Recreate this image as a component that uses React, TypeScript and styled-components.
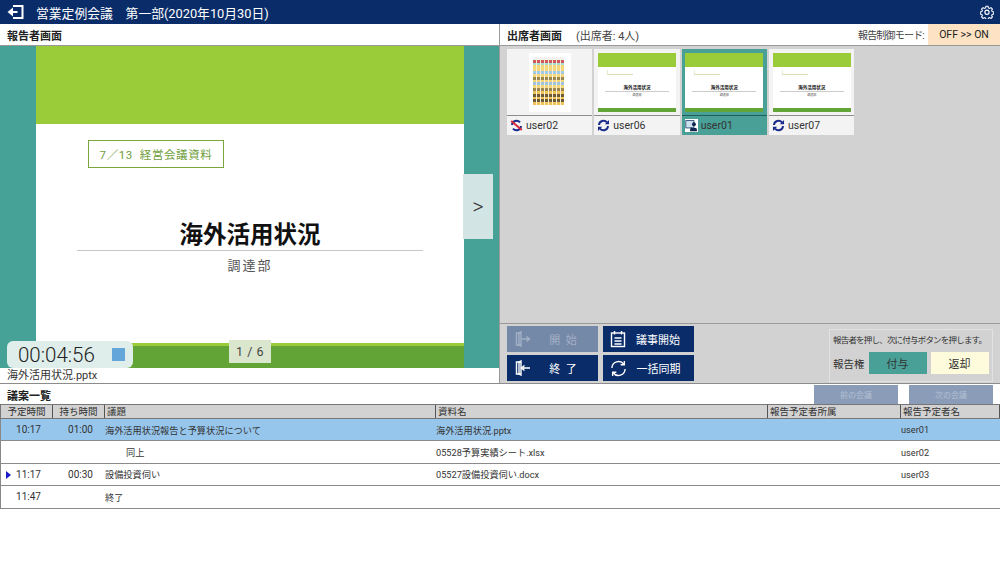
import styled, { createGlobalStyle } from "styled-components";

const GlobalStyle = createGlobalStyle`
    html, body {
        margin: 0;
        padding: 0;
        background: #fff;
        font-family: Roboto, "Noto Sans CJK JP", sans-serif;
        color: #222;
    }
`

const Page = styled.div`
    width: 1000px;
    height: 563px;
    overflow: hidden;
    display: flex;
    flex-direction: column;
    background: #fff;
`
const TopBar = styled.div`
    height: 24px;
    flex: none;
    background: #0a2d6a;
    color: #fff;
    display: flex;
    align-items: center;
    padding: 0 6px 0 7px;
    font-size: 12.8px;
`
const TopTitle = styled.span`
    margin-left: 12px;
    white-space: pre;
    flex: 1;
`
const Main = styled.div`
    height: 359px;
    flex: none;
    display: flex;
    border-bottom: 1px solid #8c8c8c;
`
const LeftPane = styled.div`
    width: 499px;
    flex: none;
    display: flex;
    flex-direction: column;
    border-right: 1px solid #999;
`
const RightPane = styled.div`
    flex: 1;
    display: flex;
    flex-direction: column;
    background: #d2d2d2;
`
const PaneHead = styled.div`
    height: 21px;
    flex: none;
    display: flex;
    align-items: center;
    padding-left: 7px;
    font-size: 11px;
    font-weight: 700;
    background: #fff;
    border-bottom: 1px solid #999;
`
const HeadNote = styled.span`
    font-weight: 400;
    margin-left: 14px;
    color: #444;
    flex: 1;
`
const ModeLabel = styled.span`
    font-weight: 400;
    font-size: 10px;
    letter-spacing: -0.8px;
    color: #444;
    margin-right: 4px;
`
const ModeButton = styled.div`
    width: 72px;
    height: 100%;
    background: #fde3c4;
    font-weight: 400;
    font-size: 10.5px;
    display: flex;
    align-items: center;
    justify-content: center;
`
const Stage = styled.div`
    height: 322px;
    flex: none;
    background: #46a297;
    position: relative;
    padding: 0 35px 0 36px;
`
const Slide = styled.div`
    height: 100%;
    display: flex;
    flex-direction: column;
    background: #fff;
`
const SlideTop = styled.div`
    height: 78px;
    flex: none;
    background: #99cc38;
`
const SlideBody = styled.div`
    flex: 1;
    display: flex;
    flex-direction: column;
    align-items: center;
    padding-top: 16px;
`
const SlideTag = styled.div`
    align-self: flex-start;
    margin-left: 52px;
    width: 134px;
    height: 26px;
    border: 1px solid #7aa63a;
    color: #6f9e3c;
    font-size: 11.5px;
    letter-spacing: 0.6px;
    white-space: pre;
    display: flex;
    align-items: center;
    justify-content: center;
`
const SlideTitle = styled.div`
    margin-top: 52px;
    width: 346px;
    height: 30px;
    text-align: center;
    font-size: 23.5px;
    line-height: 30px;
    font-weight: 700;
    color: #111;
    border-bottom: 1px solid #c8c8c8;
`
const SlideSub = styled.div`
    margin-top: 4px;
    font-size: 13px;
    letter-spacing: 2px;
    color: #555;
`
const SlideBottom = styled.div`
    height: 25px;
    flex: none;
    background: #63a437;
    border-top: 3px solid #99cc38;
    box-sizing: border-box;
`
const NextArrow = styled.div`
    position: absolute;
    left: 463px;
    top: 128px;
    width: 30px;
    height: 65px;
    background: #d2e4e3;
    color: #333;
    font-size: 22px;
    font-weight: 300;
    display: flex;
    align-items: center;
    justify-content: center;
`
const Timer = styled.div`
    position: absolute;
    left: 7px;
    bottom: 0;
    width: 126px;
    height: 27px;
    border-radius: 6px;
    background: #dfeeea;
    display: flex;
    align-items: center;
    padding-left: 11px;
    box-sizing: border-box;
    font-size: 20.5px;
    font-weight: 300;
    color: #222;
`
const StopMark = styled.span`
    width: 13px;
    height: 13px;
    margin-left: 17px;
    background: #64a5da;
`
const PageMark = styled.div`
    position: absolute;
    left: 229px;
    bottom: 5px;
    width: 42px;
    height: 23px;
    background: #dbe6cf;
    color: #444;
    font-size: 12.5px;
    letter-spacing: 0.5px;
    display: flex;
    align-items: center;
    justify-content: center;
`
const FileName = styled.div`
    flex: 1;
    padding-left: 7px;
    font-size: 11px;
    line-height: 16px;
    color: #333;
`
const ThumbRow = styled.div`
    height: 278px;
    flex: none;
    box-sizing: border-box;
    display: flex;
    gap: 2px;
    padding: 3px 0 0 7px;
    border-bottom: 1px solid #999;
`
const ThumbCard = styled.div<{ $active?: boolean }>`
    width: 85.33px;
    height: 86px;
    display: flex;
    flex-direction: column;
    background: ${p => (p.$active ? "#49a097" : "#f3f3f3")};
`
const ThumbShot = styled.div`
    height: 66px;
    flex: none;
    box-sizing: border-box;
    padding: 4px 3px 3px;
    display: flex;
    justify-content: center;
`
const MiniSlide = styled.div`
    width: 78px;
    height: 59px;
    background: #fff;
    display: flex;
    flex-direction: column;
`
const MiniTop = styled.div`
    height: 14px;
    background: #99cc38;
`
const MiniBody = styled.div`
    flex: 1;
    display: flex;
    flex-direction: column;
    align-items: center;
    padding-top: 3px;
`
const MiniTag = styled.div`
    align-self: flex-start;
    margin-left: 9px;
    width: 25px;
    height: 4px;
    border-bottom: 1px solid #d4e0b4;
    border-left: 1px solid #e6ecd2;
`
const MiniTitle = styled.div`
    margin-top: 10px;
    width: 64px;
    height: 6px;
    line-height: 5px;
    font-size: 4.5px;
    font-weight: 700;
    color: #111;
    text-align: center;
    border-bottom: 1px solid #ccc;
`
const MiniSub = styled.div`
    margin-top: 1px;
    font-size: 3px;
    line-height: 4px;
    color: #555;
`
const MiniBottom = styled.div`
    height: 4px;
    background: #63a437;
`
const Sheet = styled.div`
    width: 42px;
    height: 59px;
    background: #fff;
    padding: 4px 7px 7px 4px;
    box-sizing: border-box;
    display: flex;
    flex-direction: column;
`
const SheetLine = styled.div<{ $color: string }>`
    flex: 1;
    background: repeating-linear-gradient(90deg, ${p => p.$color} 0 3px, #f7efd8 3px 4px);
`
const ThumbFoot = styled.div<{ $active?: boolean }>`
    flex: 1;
    display: flex;
    align-items: center;
    gap: 3px;
    padding-left: 3px;
    font-size: 10.5px;
    border-top: 1px solid ${p => (p.$active ? "#1f5f58" : "#8c8c8c")};
    color: #333;
`
const Controls = styled.div`
    flex: 1;
    display: flex;
    padding: 2px 6px 0 7px;
    justify-content: space-between;
`
const ActionGrid = styled.div`
    display: grid;
    grid-template-columns: 91px 91px;
    grid-auto-rows: 26px;
    gap: 3px 5px;
`
const ActionButton = styled.div<{ $disabled?: boolean }>`
    background: ${p => (p.$disabled ? "#7488a8" : "#0a2d6a")};
    color: ${p => (p.$disabled ? "#a3b0c6" : "#fff")};
    display: flex;
    align-items: center;
    padding-left: 7px;
    font-size: 11px;
`
const ActionText = styled.span`
    flex: 1;
    text-align: center;
    padding-right: 4px;
    white-space: pre;
`
const GrantBox = styled.div`
    width: 164px;
    height: 53px;
    margin: 3px 1px 0 0;
    padding: 3px 3px;
    box-sizing: border-box;
    border: 1px solid #e2e2e2;
    color: #333;
`
const GrantNote = styled.div`
    line-height: 14px;
    font-size: 8.5px;
    letter-spacing: -0.8px;
    white-space: nowrap;
`
const GrantRow = styled.div`
    display: flex;
    align-items: center;
    margin-top: 5px;
    font-size: 10.5px;
    white-space: nowrap;
`
const GrantButton = styled.div<{ $bg: string }>`
    width: 58px;
    height: 22px;
    flex: none;
    background: ${p => p.$bg};
    font-size: 11px;
    display: flex;
    align-items: center;
    justify-content: center;
    margin-left: 4px;
`
const AgendaHead = styled.div`
    height: 21px;
    flex: none;
    display: flex;
    align-items: center;
    padding: 0 7px;
    font-size: 11px;
    font-weight: 700;
`
const AgendaTitle = styled.span`
    flex: 1;
`
const MeetingButton = styled.div`
    width: 84px;
    height: 19px;
    margin-left: 11px;
    background: #8a9cb8;
    color: #b4c0d2;
    font-size: 8px;
    font-weight: 400;
    display: flex;
    align-items: center;
    justify-content: center;
`
const Row = styled.div`
    display: grid;
    grid-template-columns: 52px 52px 331px 332px 133px 1fr;
    box-sizing: border-box;
    align-items: center;
    font-size: 9.2px;
    color: #333;
    border-left: 1px solid #888;
`
const HeaderRow = styled(Row)`
    height: 15px;
    margin-top: -1px;
    background: #d2d2d2;
    border-top: 1px solid #777;
    border-bottom: 1px solid #777;
    border-left-color: #777;
    flex: none;
    font-size: 9.5px;
`
const HeadCell = styled.div<{ $center?: boolean }>`
    height: 100%;
    line-height: 13px;
    padding-left: ${p => (p.$center ? 0 : 2)}px;
    text-align: ${p => (p.$center ? "center" : "left")};
    border-right: 1px solid #555;
    overflow: hidden;
    white-space: nowrap;
`
const BodyRow = styled(Row)<{ $selected?: boolean }>`
    height: 22.4px;
    flex: none;
    background: ${p => (p.$selected ? "#97c6ec" : "#fff")};
    border-bottom: 1px solid #8a8a8a;
`
const TimeCell = styled.div`
    text-align: center;
    font-size: 10px;
    padding-left: 3px;
`
const Marker = styled.span`
    position: absolute;
    left: 6px;
    margin-top: 2px;
    width: 0;
    height: 0;
    border-left: 5px solid #1a1acb;
    border-top: 4.5px solid transparent;
    border-bottom: 4.5px solid transparent;
`
const Cell = styled.div<{ $indent?: number }>`
    padding-left: ${p => p.$indent ?? 0}px;
`

function SyncIcon() {
    return (
        <svg width="13" height="13" viewBox="0 0 16 16" fill="none">
            <path d="M2.5 7.5A5.5 5.5 0 0 1 12.3 4.2" stroke="#1a2a8a" strokeWidth="2.4" />
            <path d="M13.5 8.5A5.5 5.5 0 0 1 3.7 11.8" stroke="#1a2a8a" strokeWidth="2.4" />
            <path d="M14.8 1.2v5.2H9.6zM1.2 14.8V9.6h5.2z" fill="#1a2a8a" />
        </svg>
    );
}

function BlockedSyncIcon() {
    return (
        <svg width="13" height="13" viewBox="0 0 16 16" fill="none">
            <path d="M2.5 7.5A5.5 5.5 0 0 1 12.3 4.2" stroke="#1a2a8a" strokeWidth="2.4" />
            <path d="M13.5 8.5A5.5 5.5 0 0 1 3.7 11.8" stroke="#1a2a8a" strokeWidth="2.4" />
            <path d="M1.5 2.5l13 11" stroke="#d8283a" strokeWidth="2.4" />
        </svg>
    );
}

function PresenterIcon() {
    return (
        <svg width="13" height="13" viewBox="0 0 16 16">
            <rect width="16" height="16" fill="#fff" />
            <rect x="1" y="2" width="10" height="9" fill="#cfe0ee" stroke="#1a3a6a" />
            <circle cx="11" cy="6.5" r="2.4" fill="#10264f" />
            <path d="M6 15l1-5 3 1h4l1 4z" fill="#10264f" />
        </svg>
    );
}

function ExitIcon() {
    return (
        <svg width="17" height="14" viewBox="0 0 17 14" fill="none" stroke="#fff" strokeWidth="2">
            <path d="M6 1h9.5v12H6" />
            <path d="M10.500 7H4" />
            <path d="M6 2.500L0.500 7L6 11.500z" fill="#fff" stroke="none" />
        </svg>
    );
}

function GearIcon() {
    return (
        <svg width="14" height="14" viewBox="0 0 24 24" fill="none" stroke="#fff" strokeWidth="2">
            <path d="M10 2h4l.6 3 2.4 1 2.6-1.600 2.800 2.800-1.600 2.600 1 2.400 3 .6v4l-3 .6-1 2.400 1.600 2.600-2.800 2.800-2.600-1.600-2.400 1-.6 3h-4l-.6-3-2.400-1-2.600 1.600-2.800-2.800 1.600-2.600-1-2.400-3-.6v-4l3-.6 1-2.400-1.600-2.600 2.800-2.800L7 6l2.400-1z" transform="translate(1.200 0.400) scale(0.9)" />
            <circle cx="12" cy="12.500" r="3.600" />
        </svg>
    );
}

function DoorIcon({ out, color }: { out?: boolean; color: string }) {
    return (
        <svg width="18" height="16" viewBox="0 0 18 16" fill="none" stroke={color} strokeWidth="1.4">
            <path d="M7 2H2.500v12H7" />
            <path d="M7 1v14l-2-1V2z" />
            <path d={out ? "M8 8h7M12.500 5.500L15.500 8l-3 2.500" : "M16 8H8M10.500 5.500L7.500 8l3 2.500"} />
        </svg>
    );
}

function MinutesIcon() {
    return (
        <svg width="16" height="18" viewBox="0 0 16 18" fill="none" stroke="#fff" strokeWidth="1.4">
            <rect x="1.500" y="3" width="13" height="13.500" />
            <path d="M4.500 1v3.500M11.500 1v3.500M4.500 8h7M4.500 11h7M4.500 14h7" />
        </svg>
    );
}

function BulkSyncIcon() {
    return (
        <svg width="17" height="17" viewBox="0 0 16 16" fill="none" stroke="#fff" strokeWidth="1.3">
            <path d="M1.800 7.500A6.200 6.200 0 0 1 13 4M14.200 8.500A6.200 6.200 0 0 1 3 12" />
            <path d="M13.500 1v3.500H10M2.500 15v-3.500H6" />
        </svg>
    );
}

function MiniDeck() {
    return (
        <MiniSlide>
            <MiniTop />
            <MiniBody>
                <MiniTag />
                <MiniTitle>海外活用状況</MiniTitle>
                <MiniSub>調達部</MiniSub>
            </MiniBody>
            <MiniBottom />
        </MiniSlide>
    );
}

const sheetColors = ["#f2f2f2", "#d0575c", "#a8dcd2", "#f5d77a", "#f5d77a", "#9fc8ea", "#f5d77a", "#9a8650", "#f5d77a", "#9cc3e0", "#f5d77a", "#9a8650", "#efc356", "#6a5a35", "#efc356", "#6a5a35", "#efc356"];

const agenda = [
    { start: "10:17", span: "01:00", title: "海外活用状況報告と予算状況について", file: "海外活用状況.pptx", user: "user01", selected: true },
    { start: "", span: "", title: "同上", file: "05528予算実績シート.xlsx", user: "user02", indent: 21 },
    { start: "11:17", span: "00:30", title: "設備投資伺い", file: "05527設備投資伺い.docx", user: "user03", marked: true },
    { start: "11:47", span: "", title: "終了", file: "", user: "" },
];

function App() {
    return (
        <Page>
            <GlobalStyle />
            <TopBar>
                <ExitIcon />
                <TopTitle>営業定例会議　第一部(2020年10月30日)</TopTitle>
                <GearIcon />
            </TopBar>
            <Main>
                <LeftPane>
                    <PaneHead>報告者画面</PaneHead>
                    <Stage>
                        <Slide>
                            <SlideTop />
                            <SlideBody>
                                <SlideTag>7／13  経営会議資料</SlideTag>
                                <SlideTitle>海外活用状況</SlideTitle>
                                <SlideSub>調達部</SlideSub>
                            </SlideBody>
                            <SlideBottom />
                        </Slide>
                        <NextArrow>&gt;</NextArrow>
                        <Timer>00:04:56<StopMark /></Timer>
                        <PageMark>1 / 6</PageMark>
                    </Stage>
                    <FileName>海外活用状況.pptx</FileName>
                </LeftPane>
                <RightPane>
                    <PaneHead>
                        出席者画面
                        <HeadNote>(出席者: 4人)</HeadNote>
                        <ModeLabel>報告制御モード:</ModeLabel>
                        <ModeButton>OFF &gt;&gt; ON</ModeButton>
                    </PaneHead>
                    <ThumbRow>
                        <ThumbCard>
                            <ThumbShot>
                                <Sheet>
                                    {sheetColors.map((c, i) => <SheetLine key={i} $color={c} />)}
                                </Sheet>
                            </ThumbShot>
                            <ThumbFoot><BlockedSyncIcon />user02</ThumbFoot>
                        </ThumbCard>
                        <ThumbCard>
                            <ThumbShot><MiniDeck /></ThumbShot>
                            <ThumbFoot><SyncIcon />user06</ThumbFoot>
                        </ThumbCard>
                        <ThumbCard $active>
                            <ThumbShot><MiniDeck /></ThumbShot>
                            <ThumbFoot $active><PresenterIcon />user01</ThumbFoot>
                        </ThumbCard>
                        <ThumbCard>
                            <ThumbShot><MiniDeck /></ThumbShot>
                            <ThumbFoot><SyncIcon />user07</ThumbFoot>
                        </ThumbCard>
                    </ThumbRow>
                    <Controls>
                        <ActionGrid>
                            <ActionButton $disabled><DoorIcon out color="#a3b0c6" /><ActionText>開  始</ActionText></ActionButton>
                            <ActionButton><MinutesIcon /><ActionText>議事開始</ActionText></ActionButton>
                            <ActionButton><DoorIcon color="#fff" /><ActionText>終  了</ActionText></ActionButton>
                            <ActionButton><BulkSyncIcon /><ActionText>一括同期</ActionText></ActionButton>
                        </ActionGrid>
                        <GrantBox>
                            <GrantNote>報告者を押し、次に付与ボタンを押します。</GrantNote>
                            <GrantRow>
                                報告権
                                <GrantButton $bg="#49a097">付与</GrantButton>
                                <GrantButton $bg="#fdfbdc">返却</GrantButton>
                            </GrantRow>
                        </GrantBox>
                    </Controls>
                </RightPane>
            </Main>
            <AgendaHead>
                <AgendaTitle>議案一覧</AgendaTitle>
                <MeetingButton>前の会議</MeetingButton>
                <MeetingButton>次の会議</MeetingButton>
            </AgendaHead>
            <HeaderRow>
                <HeadCell $center>予定時間</HeadCell>
                <HeadCell $center>持ち時間</HeadCell>
                <HeadCell>議題</HeadCell>
                <HeadCell>資料名</HeadCell>
                <HeadCell>報告予定者所属</HeadCell>
                <HeadCell>報告予定者名</HeadCell>
            </HeaderRow>
            {agenda.map((row, i) => (
                <BodyRow key={i} $selected={row.selected}>
                    <TimeCell>{row.marked && <Marker />}{row.start}</TimeCell>
                    <TimeCell>{row.span}</TimeCell>
                    <Cell $indent={row.indent}>{row.title}</Cell>
                    <Cell>{row.file}</Cell>
                    <Cell />
                    <Cell>{row.user}</Cell>
                </BodyRow>
            ))}
        </Page>
    );
}

export default App;
